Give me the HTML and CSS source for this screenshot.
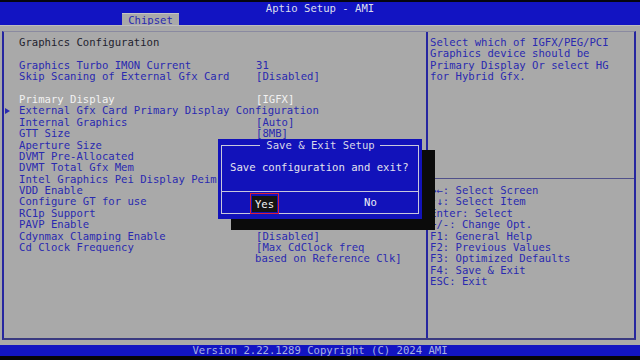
FILE: index.html
```html
<!DOCTYPE html>
<html>
<head>
<meta charset="utf-8">
<link rel="stylesheet" href="styles.css">
</head>
<body>
<div class="screen">
  <div class="topbar"></div>
  <header class="header">
    <div class="title">Aptio Setup - AMI</div>
    <div class="tabs"><span class="tab">Chipset</span></div>
  </header>
  <main class="main">
    <div class="frame">
      <section class="left">
        <div class="row heading"><span></span><span>Graphics Configuration</span></div>
        <div class="row"></div>
        <div class="row"><span></span><span>Graphics Turbo IMON Current</span><span>31</span></div>
        <div class="row"><span></span><span>Skip Scaning of External Gfx Card</span><span>[Disabled]</span></div>
        <div class="row"></div>
        <div class="row sel"><span></span><span>Primary Display</span><span>[IGFX]</span></div>
        <div class="row"><span class="mark"><i class="tri"></i></span><span class="wide">External Gfx Card Primary Display Configuration</span></div>
        <div class="row"><span></span><span>Internal Graphics</span><span>[Auto]</span></div>
        <div class="row"><span></span><span>GTT Size</span><span>[8MB]</span></div>
        <div class="row"><span></span><span>Aperture Size</span></div>
        <div class="row"><span></span><span>DVMT Pre-Allocated</span></div>
        <div class="row"><span></span><span>DVMT Total Gfx Mem</span></div>
        <div class="row"><span></span><span class="clip">Intel Graphics Pei Display Peim</span></div>
        <div class="row"><span></span><span>VDD Enable</span></div>
        <div class="row"><span></span><span>Configure GT for use</span></div>
        <div class="row"><span></span><span>RC1p Support</span></div>
        <div class="row"><span></span><span>PAVP Enable</span></div>
        <div class="row"><span></span><span>Cdynmax Clamping Enable</span><span>[Disabled]</span></div>
        <div class="row"><span></span><span>Cd Clock Frequency</span><span>[Max CdClock freq</span></div>
        <div class="row"><span></span><span></span><span class="cont">based on Reference Clk]</span></div>
      </section>
      <aside class="right">
        <div class="help">Select which of IGFX/PEG/PCI
Graphics device should be
Primary Display Or select HG
for Hybrid Gfx.</div>
        <div class="keys">→←: Select Screen
↑↓: Select Item
Enter: Select
+/-: Change Opt.
F1: General Help
F2: Previous Values
F3: Optimized Defaults
F4: Save &amp; Exit
ESC: Exit</div>
      </aside>
    </div>
  </main>
  <footer class="footer">Version 2.22.1289 Copyright (C) 2024 AMI</footer>
  <div class="bottombar"></div>

  <div class="dialog">
    <fieldset class="dframe">
      <legend class="dtitle">Save &amp; Exit Setup</legend>
      <div class="dmsg">Save configuration and exit?</div>
      <div class="dbtns">
        <div class="yes"><span class="yes-in">Yes</span></div>
        <div class="no">No</div>
      </div>
    </fieldset>
  </div>
</div>
</body>
</html>
```
FILE: styles.css
```css
* { box-sizing: border-box; }
html, body { margin: 0; padding: 0; background: #000; }
.screen {
  position: relative;
  width: 640px;
  height: 360px;
  overflow: hidden;
  display: flex;
  flex-direction: column;
  font-family: "DejaVu Sans Mono", "Liberation Mono", monospace;
  font-size: 10.6px;
  line-height: 11.4px;
  color: #2a2ab0;
}
.topbar { height: 2px; background: #050510; }
.header {
  height: 23px;
  background: #1214c2;
  padding-top: 1px;
  display: flex;
  flex-direction: column;
}
.title {
  height: 10px;
  line-height: 10px;
  text-align: center;
  color: #dcdeee;
}
.tabs { height: 12px; padding-left: 122px; display: flex; }
.tab {
  display: block;
  width: 57px;
  height: 12px;
  line-height: 12px;
  background: #a9a9a9;
  border-top: 1px solid #c4c4c4;
  color: #2a2ab0;
  text-align: center;
}
.main {
  height: 320px;
  background: #a9a9a9;
  border-top: 1px solid #bdbdbd;
  padding: 5px 4px 5px 2px;
  display: flex;
}
.frame {
  flex: 1;
  display: grid;
  grid-template-columns: 422px 1fr;
  border-top: 1px solid #8a8aa0;
  border-left: 2px solid #2626a0;
  border-right: 2px solid #2626a0;
  border-bottom: 2px solid #3a3a80;
}
.left { padding-top: 5px; }
.row {
  display: grid;
  grid-template-columns: 15px 237px 1fr;
  height: 11.4px;
  white-space: pre;
}
.row.heading { color: #22222e; }
.row.sel { color: #f2f2f2; }
.wide { grid-column: 2 / 4; }
.clip { width: 199px; overflow: hidden; }
.cont { margin-left: -1px; }
.mark { display: flex; align-items: center; padding-left: 1px; }
.tri {
  display: block;
  width: 0; height: 0;
  border-top: 3.5px solid transparent;
  border-bottom: 3.5px solid transparent;
  border-left: 5px solid #2a2ab0;
}
.right {
  border-left: 2px solid #2626a0;
  display: flex;
  flex-direction: column;
}
.help {
  height: 147px;
  padding: 5px 0 0 2px;
  white-space: pre;
  border-bottom: 1px solid #50508a;
}
.keys {
  padding: 6px 0 0 2px;
  white-space: pre;
}
.footer {
  height: 11px;
  line-height: 11px;
  background: #1214c2;
  color: #a8b0e2;
  text-align: center;
}
.bottombar { flex: 1; background: #050508; }

.dialog {
  position: absolute;
  left: 218px;
  top: 139px;
  width: 204px;
  height: 80px;
  background: #1212ba;
  box-shadow: 13px 11px 0 #0b0b0b;
  padding: 1px 3px 5px 3px;
  color: #e4e4ee;
}
.dframe {
  margin: 0;
  padding: 0;
  min-width: 0;
  height: 74px;
  border: 1px solid #c8c8dc;
}
.dtitle {
  margin: 0 auto;
  padding: 0 5px 0 6px;
  line-height: 11.4px;
  color: #d8d8e8;
}
.dmsg {
  padding: 11px 0 17px 8px;
  white-space: pre;
  border-bottom: 1px solid #c8c8dc;
}
.dbtns {
  display: flex;
  height: 20px;
  padding-left: 28px;
}
.yes {
  width: 29px;
  height: 21px;
  margin-top: 1px;
  border: 1px solid #d8203a;
  padding: 2px 1px 1px 1px;
}
.yes-in {
  display: block;
  height: 16px;
  line-height: 16px;
  background: #141414;
  color: #f4f4f4;
  text-align: center;
}
.no {
  margin-left: 85px;
  line-height: 21px;
  color: #eeeef6;
}
```
